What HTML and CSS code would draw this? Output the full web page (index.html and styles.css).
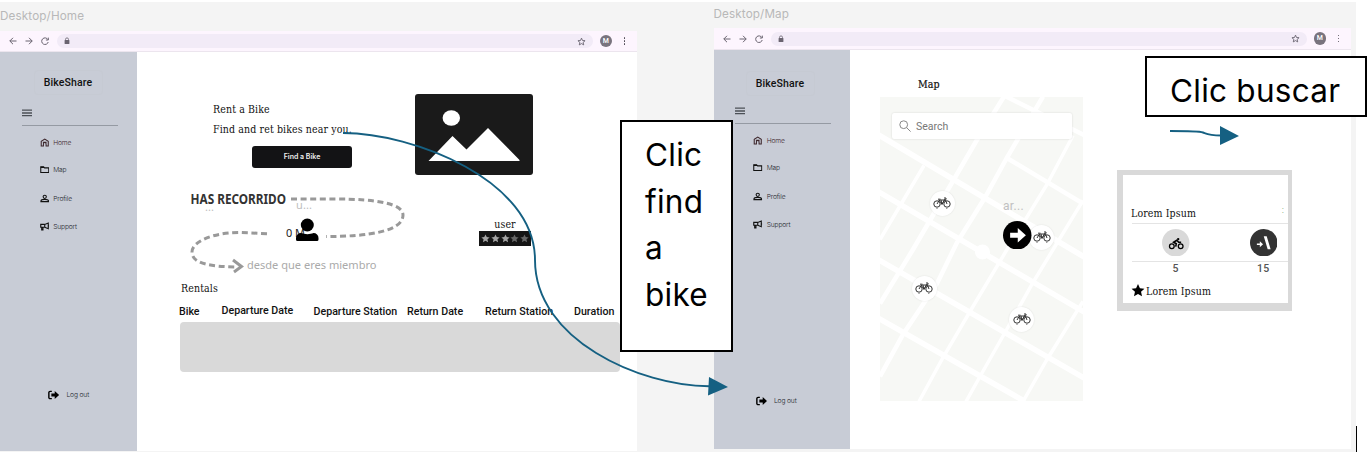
FILE: index.html
```html
<!DOCTYPE html>
<html lang="es">
<head>
<meta charset="utf-8">
<title>BikeShare</title>
<link rel="stylesheet" href="styles.css">
</head>
<body>
<svg class="defs" width="0" height="0">
  <symbol id="back" viewBox="0 0 8 8"><path d="M7.5 4H.8M4 .8.8 4 4 7.2" fill="none" stroke="currentColor"/></symbol>
  <symbol id="forward" viewBox="0 0 8 8"><path d="M.5 4h6.700M4 .8 7.200 4 4 7.200" fill="none" stroke="currentColor"/></symbol>
  <symbol id="reload" viewBox="0 0 8 8"><path d="M6.900 2.600A3.300 3.300 0 1 0 7.200 5M7.300.6V3H4.900" fill="none" stroke="currentColor"/></symbol>
  <symbol id="lock" viewBox="0 0 6 8"><path d="M1.500 3.500V2.400a1.500 1.500 0 0 1 3 0v1.100" fill="none" stroke="currentColor" stroke-width=".8"/><rect x=".6" y="3" width="4.800" height="4" rx=".5" fill="currentColor"/></symbol>
  <symbol id="fav" viewBox="0 0 24 24"><path d="m12 3 2.700 6.300 6.800.6-5.200 4.500 1.600 6.700L12 17.500l-5.900 3.600 1.600-6.700L2.500 9.900l6.800-.6z" fill="none" stroke="currentColor" stroke-width="2.400"/></symbol>
  <symbol id="star" viewBox="0 0 24 24"><path d="m12 1 3.300 7.200 7.700.8-5.800 5.200 1.700 7.800L12 18l-6.900 4 1.700-7.800L1 9l7.700-.8z" fill="currentColor"/></symbol>
  <symbol id="burger" viewBox="0 0 10 8"><path d="M0 1.200h10M0 4h10M0 6.600h10" stroke="currentColor" stroke-width="1.300"/></symbol>
  <symbol id="home" viewBox="0 0 10 9"><path d="M1.300 8.100V3.200L5 .9l3.700 2.300v4.900H6.400V5.900a1.400 1.400 0 0 0-2.800 0v2.200zM3 4.200h4" fill="none" stroke="currentColor" stroke-width="1.100"/></symbol>
  <symbol id="folder" viewBox="0 0 10 8"><path d="M.8 1.200h3l1 1.100h4.400v4.900H.8z" fill="none" stroke="currentColor" stroke-width="1.100"/><path d="M.8 1.200h3l1 1.200H.8z" fill="currentColor"/></symbol>
  <symbol id="profile" viewBox="0 0 10 9"><circle cx="5" cy="2.700" r="1.700" fill="none" stroke="currentColor" stroke-width="1.100"/><path d="M1 7.800V7.300C1 5.800 3 5.400 5 5.400s4 .4 4 1.900v.5z" fill="none" stroke="currentColor" stroke-width="1.200"/></symbol>
  <symbol id="support" viewBox="0 0 10 9"><path d="M.8 2.300H5L8.700.8v6L5 5.300H.8zM1.800 5.500v2.600h1.300V5.500M5 2.300v3" fill="none" stroke="currentColor" stroke-width="1.200"/><path d="M8.800 3a.9.900 0 0 1 0 1.800z" fill="currentColor"/></symbol>
  <symbol id="logout" viewBox="0 0 12 10"><path d="M4 1.200H2.200A1.300 1.300 0 0 0 .9 2.500v5a1.300 1.300 0 0 0 1.300 1.300H4" fill="none" stroke="currentColor" stroke-width="1.500"/><path d="M3.500 3.400H7V.9L11.600 5 7 9.100V6.600H3.500z" fill="currentColor"/></symbol>
  <symbol id="bike" viewBox="0 0 18 13"><g fill="none" stroke="#333" stroke-width="1"><circle cx="4" cy="7" r="3.200"/><circle cx="14" cy="7" r="3.200"/><path d="M4 7 6.500 3h5L9 7.300 6 3M9 7.300 12 2l2 5M5 2.200h2.500M11 1h2v1.500M8 3l1 4.300"/><path d="M4 11v1M13.800 11v1" stroke="#777"/></g></symbol>
</svg>

<div class="canvas">
  <section class="frame frame-home">
    <h2 class="frame-label">Desktop/Home</h2>
    <div class="browser">
      <svg class="bi"><use href="#back"/></svg><svg class="bi"><use href="#forward"/></svg><svg class="bi"><use href="#reload"/></svg>
      <div class="address"><svg class="lock"><use href="#lock"/></svg><svg class="fav"><use href="#fav"/></svg></div>
      <span class="avatar">M</span><span class="dots"><i></i><i></i><i></i></span>
    </div>
    <div class="page">
      <aside class="sidebar">
        <div class="brand">BikeShare</div>
        <svg class="burger"><use href="#burger"/></svg>
        <nav class="nav">
          <a class="item active"><svg><use href="#home"/></svg>Home</a>
          <a class="item"><svg><use href="#folder"/></svg>Map</a>
          <a class="item"><svg><use href="#profile"/></svg>Profile</a>
          <a class="item"><svg><use href="#support"/></svg>Support</a>
        </nav>
        <a class="logout"><svg><use href="#logout"/></svg>Log out</a>
      </aside>
      <main class="home">
        <div class="hero">
          <div class="hero-copy">
            <h1 class="slab">Rent a Bike</h1>
            <p class="slab tagline">Find and ret bikes near you.</p>
            <button class="find">Find a Bike</button>
          </div>
          <svg class="picture" viewBox="0 0 118 81"><rect width="118" height="81" rx="3" fill="#1a1a1a"/><ellipse cx="36.300" cy="24" rx="8.700" ry="7.700" fill="#fff"/><path d="M13.500 67 37.500 42 51.500 55.500 73 34 104.500 66v1z" fill="#fff"/></svg>
        </div>
        <div class="stats">
          <svg class="journey" viewBox="185 186 225 92">
            <g fill="none" stroke="#999" stroke-width="3" stroke-dasharray="6 3.600">
              <path d="M291 199H335C378 199 403 204 403 215C403 231 370 236.500 326 236.500"/>
              <path d="M267 233.700L240 232.500C212 232.500 192 242 192 252C192 264 211 266.500 236 267"/>
            </g>
            <path d="M233 260l8.500 6.500-7.500 5.500" fill="none" stroke="#999" stroke-width="3"/>
            <text x="190.500" y="204" class="j-title" textLength="95.500" lengthAdjust="spacingAndGlyphs">HAS RECORRIDO</text>
            <text x="205" y="211" class="j-faint">...</text>
            <text x="296" y="209" class="j-faint" textLength="16">u...</text>
            <text x="286" y="236.500" class="j-value" textLength="19" lengthAdjust="spacingAndGlyphs">0 M</text>
            <g fill="#000"><circle cx="307.300" cy="225" r="6.500"/><path d="M296 239.500V238a5 5 0 0 1 5-5c4 1.500 9 1.500 12.500 0a5 5 0 0 1 5 5v1.500a1.500 1.500 0 0 1-1.500 1.500h-19.500a1.500 1.500 0 0 1-1.500-1.500z"/></g>
            <text x="247" y="269" class="j-since" textLength="129.500" lengthAdjust="spacingAndGlyphs">desde que eres miembro</text>
          </svg>
          <div class="rating">
            <span class="slab">user</span>
            <div class="stars"><svg><use href="#star"/></svg><svg><use href="#star"/></svg><svg><use href="#star"/></svg><svg class="dim"><use href="#star"/></svg><svg class="dim"><use href="#star"/></svg></div>
          </div>
        </div>
        <h3 class="slab rentals-title">Rentals</h3>
        <div class="cols"><span>Bike</span><span class="raised">Departure Date</span><span>Departure Station</span><span>Return Date</span><span>Return Station</span><span>Duration</span></div>
        <div class="rows"></div>
      </main>
    </div>
  </section>

  <section class="frame frame-map">
    <h2 class="frame-label">Desktop/Map</h2>
    <div class="browser">
      <svg class="bi"><use href="#back"/></svg><svg class="bi"><use href="#forward"/></svg><svg class="bi"><use href="#reload"/></svg>
      <div class="address"><svg class="lock"><use href="#lock"/></svg><svg class="fav"><use href="#fav"/></svg></div>
      <span class="avatar">M</span><span class="dots"><i></i><i></i><i></i></span>
    </div>
    <div class="page">
      <aside class="sidebar">
        <div class="brand">BikeShare</div>
        <svg class="burger"><use href="#burger"/></svg>
        <nav class="nav">
          <a class="item active"><svg><use href="#home"/></svg>Home</a>
          <a class="item"><svg><use href="#folder"/></svg>Map</a>
          <a class="item"><svg><use href="#profile"/></svg>Profile</a>
          <a class="item"><svg><use href="#support"/></svg>Support</a>
        </nav>
        <a class="logout"><svg><use href="#logout"/></svg>Log out</a>
      </aside>
      <main class="finder">
        <div class="map-col">
          <h1 class="slab map-title">Map</h1>
          <div class="map">
            <svg class="streets" viewBox="880 97.500 203 304">
              <rect x="880" y="97" width="203" height="305" fill="#f7f8f5"/>
              <g fill="none" stroke="#fff">
                <path stroke-width="5.500" d="M878 135 1085 258M878 192 1085 313M878 260 1085 379M878 318.500 1025 402"/>
                <path stroke-width="4.500" d="M998 93 1085 136M1006 158 1083 204M1004 97 976 142 913 250 880 304M1043 97 1007 158 985 198 957 243 937 284 903 335 880 377"/>
                <path stroke-width="3.500" d="M924 166 880 240M1073 136 1047 185 1007 250 970 312 943 358 919 402M1083 201 1033 283 1005 333 980 377 966 402M1083 302 1047 360 1023 402"/>
              </g>
              <circle cx="982.500" cy="252.500" r="7.500" fill="#fff"/>
            </svg>
            <div class="search"><svg viewBox="0 0 12 12"><circle cx="4.700" cy="4.700" r="3.900"/><path d="m7.600 7.600 4 4"/></svg>Search</div>
            <span class="pin p1"><svg><use href="#bike"/></svg></span>
            <span class="pin p2"><svg><use href="#bike"/></svg></span>
            <span class="pin p3"><svg><use href="#bike"/></svg></span>
            <span class="pin p4"><svg><use href="#bike"/></svg></span>
            <span class="hint">ar...</span>
            <svg class="go" viewBox="0 0 28 28"><circle cx="14" cy="14" r="14"/><path d="M7 11.500h7.500V6.800l8 7.200-8 7.200v-4.700H7z" fill="#fff"/></svg>
          </div>
        </div>
        <article class="station">
          <div class="station-name"><span class="slab">Lorem Ipsum</span><span class="more">:</span></div>
          <div class="badges">
            <svg viewBox="0 0 28 28"><circle cx="14" cy="14" r="14" fill="#d9d9d9"/><g fill="none" stroke="#000" stroke-width="1.300"><circle cx="10" cy="17.500" r="2.400"/><circle cx="19" cy="17.500" r="2.400"/><path d="m14 18 .5-3-2.700-1.500 3.200-2 2 2h2.500" stroke-width="1.600"/></g><circle cx="16.500" cy="10.300" r="1.200"/></svg>
            <svg viewBox="0 0 28 28"><circle cx="14" cy="14" r="14" fill="#333"/><path d="M14 7.500h3l4 13h-3zM7 14.700h3v-2.300l3.300 3.100-3.300 3.100v-2.200H7z" fill="#fff"/></svg>
          </div>
          <div class="counts"><span>5</span><span>15</span></div>
          <div class="favourite"><svg><use href="#star"/></svg><span class="slab">Lorem Ipsum</span></div>
        </article>
      </main>
    </div>
  </section>

  <svg class="links" viewBox="0 0 1368 452">
    <g fill="none" stroke="#156082" stroke-width="1.900">
      <path d="M343 133C413 133 535 180 535 260S640 386 709 386.300"/>
      <path d="M1170 131C1185 131 1200 131.500 1203 132.500S1208 135.500 1221 135.500"/>
    </g>
    <path d="M709 377 728 387 708 395.500zM1220 126 1239 136 1220 145z" fill="#156082"/>
  </svg>
  <div class="note note-find">Clic find a bike</div>
  <div class="note note-search">Clic buscar</div>
  <div class="caret"></div>
</div>
</body>
</html>
```
FILE: styles.css
```css
* { box-sizing: border-box; }
body { margin: 0; background: #fff; font-family: Roboto, sans-serif; color: #111; }
h1, h2, h3, p { margin: 0; font-weight: 400; }
svg { display: block; flex: none; }
.defs { position: absolute; }

/* Canvas: frames, notes and connectors are placed freely */
.canvas { position: relative; width: 1368px; height: 452px; overflow: hidden; background: linear-gradient(#f4f4f4, #f4f4f4) 0 2px / 1356px 450px no-repeat; }
.frame { position: absolute; width: 637px; display: flex; flex-direction: column; }
.frame-home { left: 0; top: 2px; height: 449px; }
.frame-map { left: 713.5px; top: 0; height: 449px; }
.frame-label { height: 29px; font: 11.7px/29px Inter, sans-serif; color: #b8b8b8; letter-spacing: .12px; }
.frame-map .frame-label { height: 28px; }

.browser { height: 21px; display: flex; align-items: center; background: #fdf5fe; border-bottom: 1px solid #ece5ee; padding-left: 8.500px; color: #6a6470; }
.frame-map .browser { height: 22px; padding-left: 9px; }
.bi { width: 8px; height: 8px; margin-right: 8px; }
.address { flex: none; width: 536px; height: 14px; border-radius: 7px; background: #f2ebf7; display: flex; align-items: center; justify-content: space-between; padding: 0 7px; }
.lock { width: 6px; height: 8px; }
.fav { width: 9px; height: 9px; }
.avatar { width: 12.500px; height: 12.500px; border-radius: 50%; background: #79747e; color: #fff; font: 500 7px/12.500px Roboto, sans-serif; text-align: center; margin-left: 7px; }
.dots { display: flex; flex-direction: column; gap: 1.300px; margin-left: 11.500px; }
.dots i { width: 1.500px; height: 1.500px; background: #49454f; border-radius: 50%; }

.page { flex: 1; display: flex; background: #fff; min-height: 0; }
.sidebar { width: 136.500px; flex: none; background: #c8ccd6; display: flex; flex-direction: column; }
.brand { width: 69px; height: 25px; margin: 18px 0 0 33.500px; border: 1px solid #c6cad3; border-radius: 4px; font-size: 10.500px; font-weight: 500; line-height: 24px; text-align: center; letter-spacing: .1px; }
.burger { width: 10px; height: 8px; margin: 14px 0 0 21.700px; color: #4c5057; }
.nav { margin: 7.500px 19px 0 21.700px; border-top: 1px solid #959aa3; padding: 4.500px 0 0 18px; display: grid; grid-template-rows: 25px 29px 29px 27px; }
.item, .logout { display: flex; align-items: center; gap: 4px; font: 300 6.700px/10px Inter, sans-serif; letter-spacing: -.15px; color: #25282e; }
.item svg { width: 9.500px; height: 9px; color: #111; }
.item.active, .item.active svg { color: #3c252b; }
.logout { margin: auto 0 51px 48px; gap: 7px; }
.logout svg { width: 11.500px; height: 10px; color: #000; }
.frame-map .brand { margin: 21px 0 0 32px; }
.frame-map .burger { margin-top: 11px; }
.frame-map .logout { margin: auto 0 43px 42px; }

.slab { font-family: "DejaVu Serif Condensed", "DejaVu Serif", serif; font-stretch: condensed; font-size: 10.500px; line-height: 14px; color: #111; letter-spacing: .12px; white-space: nowrap; }

/* Home */
.home { flex: 1; display: flex; flex-direction: column; }
.hero { display: flex; justify-content: space-between; height: 134px; padding: 42px 104.500px 0 76.500px; }
.hero-copy { padding-top: 8px; display: flex; flex-direction: column; width: 140px; }
.tagline { margin-top: 6px; }
.find { margin: 9.500px 0 0 39px; width: 100px; height: 22px; flex: none; border: 0; border-radius: 3px; background: #131315; color: #eee; font: 600 7px/22px Inter, sans-serif; padding: 0; }
.picture { width: 118px; height: 81px; }
.stats { display: flex; height: 92px; padding-left: 48.500px; }
.journey { width: 225px; height: 92px; }
.j-title { font: 700 13.500px "Noto Sans", sans-serif; fill: #333; }
.j-faint { font: 11px "Noto Sans", sans-serif; fill: #c0c0c0; }
.j-value { font: 11px "Noto Sans", sans-serif; fill: #222; }
.j-since { font: 11.500px "Noto Sans", sans-serif; fill: #aaa; }
.rating { width: 52px; margin: 31px 0 0 69px; display: flex; flex-direction: column; align-items: center; }
.stars { width: 52px; height: 15px; background: #151515; display: flex; align-items: center; justify-content: center; gap: .7px; color: #a3a3a3; }
.stars svg { width: 9px; height: 9px; }
.stars .dim { color: #666; }
.rentals-title { margin: 3px 0 0 44.500px; height: 14px; }
.cols { margin: 9px 0 0 42.500px; height: 18px; display: grid; grid-template-columns: 42.500px 92px 93.500px 78px 89px 50px; font-size: 10.650px; font-weight: 500; line-height: 16px; white-space: nowrap; }
.raised { margin-top: -1px; }
.rows { margin-left: 43.500px; width: 440px; height: 50px; border-radius: 4px; background: #d9d9d9; }

/* Map */
.finder { flex: 1; display: flex; align-items: flex-start; }
.map-col { width: 203px; margin: 27px 0 0 30px; }
.map-title { height: 20px; padding-left: 38px; -webkit-text-stroke: .2px #111; }
.map { position: relative; width: 203px; height: 304px; padding: 16px 11.500px; }
.streets { position: absolute; inset: 0; width: 203px; height: 304px; }
.search { position: relative; height: 26px; background: #fff; border-radius: 2px; box-shadow: 0 0 2px rgba(0,0,0,.15); display: flex; align-items: center; gap: 5.500px; padding-left: 7px; font-size: 10.500px; color: #777; }
.search svg { width: 12px; height: 12px; fill: none; stroke: #888; }
.pin { position: absolute; width: 25px; height: 25px; border-radius: 50%; background: #fff; box-shadow: 0 0 2px rgba(0,0,0,.1); display: grid; place-items: center; }
.pin svg { width: 18px; height: 13px; }
.p1 { left: 49.500px; top: 94px; }
.p2 { left: 149px; top: 128px; }
.p3 { left: 31.500px; top: 179px; }
.p4 { left: 129px; top: 210px; }
.hint { position: absolute; left: 123px; top: 102px; font-size: 12px; line-height: 14px; color: #c0c0c0; letter-spacing: .3px; }
.go { position: absolute; left: 123px; top: 123.500px; width: 28.500px; height: 28.500px; }

.station { width: 175px; height: 140.500px; margin: 120px 0 0 34px; border: solid #d9d9d9; border-width: 5px 4px 8px 6px; padding: 31px 0 0 8px; background: #fff; display: flex; flex-direction: column; }
.station-name { height: 17px; display: flex; justify-content: space-between; padding-right: 4px; }
.more { font-size: 9px; line-height: 8px; color: #78a878; }
.badges { height: 39px; margin-left: 1px; border: solid #e4e4e4; border-width: 1px 0; display: flex; align-items: center; gap: 60px; padding-left: 30px; }
.badges svg { width: 27.500px; height: 27.500px; }
.counts { display: flex; gap: 60px; padding-left: 31px; font-size: 10.500px; font-weight: 500; line-height: 13px; color: #555; letter-spacing: .4px; }
.counts span { width: 27.500px; text-align: center; }
.favourite { display: flex; align-items: center; gap: 1px; margin-top: 8px; }
.favourite svg { width: 14px; height: 15px; color: #000; }

.links { position: absolute; inset: 0; width: 1368px; height: 452px; }
.note { position: absolute; background: #fff; border: 2px solid #000; color: #000; font: 31.500px/46.500px Inter, sans-serif; letter-spacing: .25px; }
.note-find { left: 620px; top: 120px; width: 113px; height: 232px; padding: 10px 18px 0 23px; }
.note-search { left: 1145px; top: 56px; width: 222px; height: 61px; padding: 10px 0 0 23px; white-space: nowrap; }
.caret { position: absolute; left: 1356px; top: 426px; width: 1px; height: 26px; background: #000; }
```
